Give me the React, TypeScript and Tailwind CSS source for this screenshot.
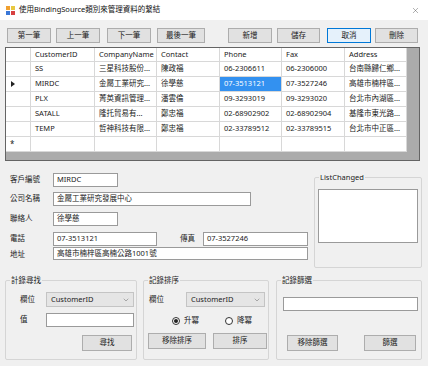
import { X, ChevronDown } from "lucide-react";

const font = "font-['Noto_Sans','Noto_Sans_CJK_TC',sans-serif]";

type BtnProps = { label: string; className: string; focus?: boolean };

const Btn = ({ label, className, focus }: BtnProps) => (
  <div
    className={`flex items-center justify-center border text-[7.5px] text-[#222] ${
      focus ? "bg-[#e5f1fb] border-[#0078d7]" : "bg-[#e1e1e1] border-[#adadad]"
    } ${className}`}
  >
    {label}
  </div>
);

const Box = ({ value, className }: { value?: string; className: string }) => (
  <div className={`bg-white border border-[#9a9a9a] flex items-center px-[3px] text-[7.5px] text-[#222] ${className}`}>
    {value}
  </div>
);

const Combo = ({ className }: { className: string }) => (
  <div className={`bg-[#e5e5e5] border border-[#c4c4c4] flex items-center justify-between pl-[4px] pr-[3px] text-[7.5px] text-[#222] ${className}`}>
    <span>CustomerID</span>
    <ChevronDown size={8} strokeWidth={1.5} color="#666" />
  </div>
);

const Group = ({ title, className, children }: { title: string; className: string; children?: React.ReactNode }) => (
  <div className={`relative border border-[#d5d5d5] rounded-[2px] ${className}`}>
    <span className="absolute -top-[6px] left-[4px] px-[1px] bg-[#f0f0f0] text-[7.5px] leading-[10px] text-[#222]">
      {title}
    </span>
    {children}
  </div>
);

const cols = [
  { name: "CustomerID", w: "w-[64px]" },
  { name: "CompanyName", w: "w-[62px]" },
  { name: "Contact", w: "w-[63px]" },
  { name: "Phone", w: "w-[62px]" },
  { name: "Fax", w: "w-[63px]" },
  { name: "Address", w: "w-[62px]" },
];

const rows = [
  ["SS", "三星科技股份...", "陳政福", "06-2306611", "06-2306000", "台南縣歸仁鄉..."],
  ["MIRDC", "金屬工業研究...", "徐學慈", "07-3513121", "07-3527246", "高雄市楠梓區..."],
  ["PLX", "菁英資訊管理...", "潘雲倫", "09-3293019", "09-3293020", "台北市內湖區..."],
  ["SATALL", "隆托貿易有...", "鄭忠福", "02-68902902", "02-68902904", "基隆市東光路..."],
  ["TEMP", "哲神科技有限...", "鄭忠福", "02-33789512", "02-33789515", "台北市中正區..."],
];

const cell = "h-full border-r border-b border-[#d8d8d8] flex items-center px-[4px] overflow-hidden whitespace-nowrap";

export default function App() {
  return (
    <div className={`w-[428px] h-[366px] bg-[#f0f0f0] flex flex-col overflow-hidden text-[#1a1a1a] ${font}`}>
      {/* title bar */}
      <div className="h-[20px] bg-white flex items-center pl-[6px] pr-[8px] shrink-0">
        <svg width="9" height="9" viewBox="0 0 9 9">
          <rect x="0" y="0" width="4" height="4" fill="#f0a030" />
          <rect x="5" y="0" width="4" height="4" fill="#e8c840" />
          <rect x="0" y="5" width="4" height="4" fill="#3a78d8" />
          <rect x="5" y="5" width="4" height="4" fill="#d84040" />
        </svg>
        <span className="ml-[4px] text-[7.5px] text-[#111]">使用BindingSource類別來管理資料的繫結</span>
        <X size={9} strokeWidth={1} color="#333" className="ml-auto" />
      </div>

      {/* toolbar */}
      <div className="mt-[8px] h-[15px] flex justify-between pl-[7px] pr-[10px] shrink-0">
        <div className="flex">
          <Btn label="第一筆" className="w-[44px] h-[15px]" />
          <Btn label="上一筆" className="w-[44px] h-[15px] ml-[5px]" />
          <Btn label="下一筆" className="w-[44px] h-[15px] ml-[7px]" />
          <Btn label="最後一筆" className="w-[48px] h-[15px] ml-[6px]" />
        </div>
        <div className="flex">
          <Btn label="新增" className="w-[44px] h-[15px]" />
          <Btn label="儲存" className="w-[43px] h-[15px] ml-[5px]" />
          <Btn label="取消" className="w-[44px] h-[15px] ml-[7px]" focus />
          <Btn label="刪除" className="w-[43px] h-[15px] ml-[4px]" />
        </div>
      </div>

      {/* data grid */}
      <div className="mt-[4px] ml-[5px] w-[415px] h-[114px] border border-[#646464] bg-[#ababab] shrink-0 text-[7.5px]">
        <div className="flex h-[14px] bg-white w-[401px]">
          <div className={`${cell} w-[25px]`} />
          {cols.map((c) => (
            <div key={c.name} className={`${cell} ${c.w}`}>
              {c.name}
            </div>
          ))}
        </div>
        {rows.map((r, i) => (
          <div key={r[0]} className="flex h-[15px] bg-white w-[401px]">
            <div className={`${cell} w-[25px]`}>
              {i === 1 && (
                <svg width="4" height="6" viewBox="0 0 4 6" className="ml-[1px]">
                  <polygon points="0,0 4,3 0,6" fill="#222" />
                </svg>
              )}
            </div>
            {r.map((v, j) => (
              <div
                key={j}
                className={`${cell} ${cols[j].w} ${i === 1 && j === 3 ? "bg-[#3391f0] text-white" : ""}`}
              >
                {v}
              </div>
            ))}
          </div>
        ))}
        <div className="flex h-[15px] bg-white w-[401px]">
          <div className={`${cell} w-[25px] text-[8px]`}>*</div>
          {cols.map((c) => (
            <div key={c.name} className={`${cell} ${c.w}`} />
          ))}
        </div>
      </div>

      {/* detail fields */}
      <div className="flex h-[107px] shrink-0 text-[7.5px]">
        <div className="w-[314px] pl-[10px] pt-[12px] flex flex-col">
          <div className="flex items-center h-[14px]">
            <span className="w-[43px]">客戶編號</span>
            <Box value="MIRDC" className="w-[65px] h-[14px]" />
          </div>
          <div className="flex items-center h-[14px] mt-[5px]">
            <span className="w-[43px]">公司名稱</span>
            <Box value="金屬工業研究發展中心" className="w-[198px] h-[14px]" />
          </div>
          <div className="flex items-center h-[14px] mt-[6px]">
            <span className="w-[43px]">聯絡人</span>
            <Box value="徐學慈" className="w-[65px] h-[14px]" />
          </div>
          <div className="flex items-center h-[14px] mt-[6px]">
            <span className="w-[43px]">電話</span>
            <Box value="07-3513121" className="w-[104px] h-[14px]" />
            <span className="ml-[23px] w-[23px]">傳真</span>
            <Box value="07-3527246" className="w-[105px] h-[14px]" />
          </div>
          <div className="flex items-center h-[13px] mt-[1px]">
            <span className="w-[43px] mt-[3px]">地址</span>
            <Box value="高雄市楠梓區高楠公路1001號" className="w-[255px] h-[13px]" />
          </div>
        </div>
        <Group title="ListChanged" className="mt-[16px] w-[108px] h-[91px]">
          <div className="mt-[11px] ml-[3px] w-[100px] h-[54px] bg-white border border-[#9a9a9a]" />
        </Group>
      </div>

      {/* bottom groups */}
      <div className="flex mt-[12px] pl-[5px] shrink-0 text-[7.5px]">
        <Group title="計錄尋找" className="w-[132px] h-[80px]">
          <div className="flex items-center mt-[11px] h-[15px]">
            <span className="ml-[14px] w-[26px]">欄位</span>
            <Combo className="w-[88px] h-[15px]" />
          </div>
          <div className="flex items-center mt-[6px] h-[14px]">
            <span className="ml-[14px] w-[26px]">值</span>
            <Box className="w-[88px] h-[14px]" />
          </div>
          <div className="flex justify-end mt-[8px] pr-[4px]">
            <Btn label="尋找" className="w-[50px] h-[16px]" />
          </div>
        </Group>
        <Group title="記錄排序" className="ml-[6px] w-[126px] h-[80px]">
          <div className="flex items-center mt-[11px] h-[15px]">
            <span className="ml-[5px] w-[37px]">欄位</span>
            <Combo className="w-[79px] h-[15px]" />
          </div>
          <div className="flex items-center mt-[9px] h-[10px]">
            <div className="ml-[28px] w-[8px] h-[8px] rounded-full border border-[#333] bg-white flex items-center justify-center">
              <div className="w-[4px] h-[4px] rounded-full bg-[#222]" />
            </div>
            <span className="ml-[4px]">升冪</span>
            <div className="ml-[26px] w-[8px] h-[8px] rounded-full border border-[#333] bg-white" />
            <span className="ml-[4px]">降冪</span>
          </div>
          <div className="flex mt-[7px] pl-[4px]">
            <Btn label="移除排序" className="w-[58px] h-[16px]" />
            <Btn label="排序" className="ml-[7px] w-[54px] h-[16px]" />
          </div>
        </Group>
        <Group title="記錄篩選" className="ml-[7px] w-[146px] h-[80px]">
          <Box className="mt-[16px] ml-[6px] w-[135px] h-[14px]" />
          <div className="flex mt-[24px] pl-[10px]">
            <Btn label="移除篩選" className="w-[51px] h-[16px]" />
            <Btn label="篩選" className="ml-[26px] w-[52px] h-[16px]" />
          </div>
        </Group>
      </div>
    </div>
  );
}
